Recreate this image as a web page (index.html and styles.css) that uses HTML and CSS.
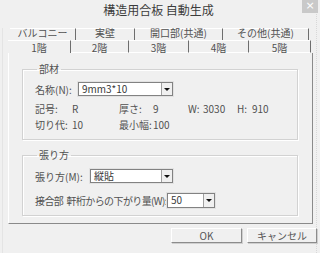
FILE: index.html
```html
<!DOCTYPE html>
<html lang="ja">
<head>
<meta charset="utf-8">
<link rel="stylesheet" href="styles.css">
</head>
<body>
<div class="window">
  <div class="titlebar">
    <div class="tb-spacer"></div>
    <div class="title">構造用合板 自動生成</div>
    <div class="tb-right"><div class="close">×</div></div>
  </div>
  <div class="client">
    <div class="tabs">
      <div class="tabrow row1">
        <div class="tab w66">バルコニー</div>
        <div class="tab w59">実壁</div>
        <div class="tab w88">開口部(共通)</div>
        <div class="tab w86">その他(共通)</div>
      </div>
      <div class="tabrow row2">
        <div class="tab sel w63">1階</div>
        <div class="tab w58">2階</div>
        <div class="tab w60">3階</div>
        <div class="tab w60">4階</div>
        <div class="tab w62">5階</div>
      </div>
    </div>
    <div class="panel">
      <fieldset class="group g1">
        <legend>部材</legend>
        <div class="namerow">
          <span class="lbl lbl-name">名称(N):</span>
          <div class="select sel-name"><span class="val">9mm3*10</span><span class="btn"><i class="arrow"></i></span></div>
        </div>
        <div class="info">
          <span>記号:</span><span>R</span><span>厚さ:</span><span>9</span><span>W:</span><span>3030</span><span>H:</span><span>910</span>
          <span>切り代:</span><span>10</span><span>最小幅:</span><span>100</span><span></span><span></span><span></span><span></span>
        </div>
      </fieldset>
      <fieldset class="group g2">
        <legend>張り方</legend>
        <div class="row r-m">
          <span class="lbl lbl-m">張り方(M):</span>
          <div class="select sel-m"><span class="val">縦貼</span><span class="btn"><i class="arrow"></i></span></div>
        </div>
        <div class="row r-w">
          <span class="lbl lbl-w">接合部&nbsp; 軒桁からの下がり量(W):</span>
          <div class="select sel-w"><span class="val">50</span><span class="btn"><i class="arrow"></i></span></div>
        </div>
      </fieldset>
    </div>
    <div class="footer">
      <div class="button b-ok">OK</div>
      <div class="button b-cancel">キャンセル</div>
    </div>
  </div>
</div>
</body>
</html>
```

FILE: styles.css
```css
* { box-sizing: border-box; }
html, body { margin: 0; padding: 0; }
body {
  width: 320px;
  height: 253px;
  background: #f0f0f0;
  font-family: "Noto Sans CJK JP", "Liberation Sans", sans-serif;
  font-size: 10px;
  color: #505050;
  overflow: hidden;
}
.window {
  height: 253px;
  border-right: 1px dotted #d8d8d8;
  width: 317px;
}
.titlebar {
  height: 20px;
  display: grid;
  grid-template-columns: 1fr auto 1fr;
}
.title {
  font-size: 12px;
  line-height: 20px;
  color: #3c3c3c;
  padding-left: 1px;
}
.tb-right { display: flex; justify-content: flex-end; }
.close {
  width: 16px;
  height: 13px;
  margin-right: -2px;
  background: #c9c9c9;
  color: #ffffff;
  font-family: "DejaVu Sans", sans-serif;
  font-size: 11px;
  line-height: 12px;
  text-align: center;
}
.client {
  border-left: 1px solid #e4e4e4;
  margin-left: 2px;
  padding: 0 4px 0 5px;
  height: 233px;
}
.tabs { margin-top: 8px; }
.tabrow { display: flex; }
.row1 { padding-left: 2px; height: 12px; }
.row2 { height: 13px; }
.tab {
  border-top: 1px solid #ffffff;
  border-right: 1px solid #6e6e6e;
  text-align: center;
  font-size: 10px;
  color: #505050;
  white-space: nowrap;
}
.row1 .tab { line-height: 8px; }
.row2 .tab { line-height: 13px; border-bottom: 1px solid #ffffff; }
.row2 .tab.sel { border-bottom: none; }
.w66 { width: 66px; }
.w59 { width: 59px; }
.w88 { width: 88px; }
.w86 { width: 86px; }
.w63 { width: 63px; }
.w58 { width: 58px; }
.w60 { width: 60px; }
.w62 { width: 62px; }
.panel {
  width: 305px;
  height: 171px;
  border-left: 1px solid #ffffff;
  border-right: 1px solid #8a8a8a;
  border-bottom: 1px solid #8a8a8a;
  padding: 10px 0 0 13px;
}
.group {
  margin: 0;
  width: 276px;
  border: 1px solid #d2d2d2;
  box-shadow: inset 1px 1px 0 #ffffff, 1px 1px 0 #ffffff;
  padding: 0 0 0 12px;
}
.group legend {
  padding: 0 2px;
  margin-left: 2px;
  font-size: 10px;
  line-height: 12px;
}
.g1 { height: 77px; }
.g2 { height: 67px; margin-top: 9px; }
.namerow { display: flex; align-items: center; margin-top: 7px; height: 14px; }
.lbl-name { width: 43px; }
.select {
  display: flex;
  height: 14px;
  background: #ffffff;
  border: 1px solid #828282;
  box-shadow: 0 0 0 1px #e2e2e2;
}
.select .val { flex: 1; padding-left: 3px; line-height: 12px; font-size: 10px; color: #3a3a3a; }
.select .btn {
  width: 11px;
  background: #f0f0f0;
  border-left: 1px solid #a0a0a0;
  display: flex;
  align-items: center;
  justify-content: center;
}
.arrow {
  width: 0; height: 0;
  border-left: 3px solid transparent;
  border-right: 3px solid transparent;
  border-top: 3px solid #111;
}
.sel-name { width: 95px; }
.info {
  display: grid;
  grid-template-columns: 37px 47px 34px 35px 15px 34px 15px auto;
  grid-auto-rows: 16px;
  margin-top: 5px;
  line-height: 16px;
}
.row { display: flex; align-items: center; height: 14px; }
.r-m { margin-top: 8px; }
.r-w { margin-top: 10px; height: 15px; }
.lbl-m { width: 55px; }
.sel-m { width: 83px; }
.lbl-w { width: 132px; letter-spacing: -0.6px; white-space: nowrap; }
.sel-w { width: 48px; height: 15px; }
.footer {
  display: flex;
  justify-content: flex-end;
  gap: 5px;
  margin-top: 4px;
  width: 309px;
}
.button {
  height: 15px;
  border: 1px solid #8c8c8c;
  border-top-color: #ffffff;
  border-left-color: #ffffff;
  box-shadow: 1px 1px 0 #cfcfcf;
  text-align: center;
  line-height: 13px;
  font-size: 10px;
  color: #555;
}
.b-ok { width: 71px; }
.b-cancel { width: 70px; }
```
